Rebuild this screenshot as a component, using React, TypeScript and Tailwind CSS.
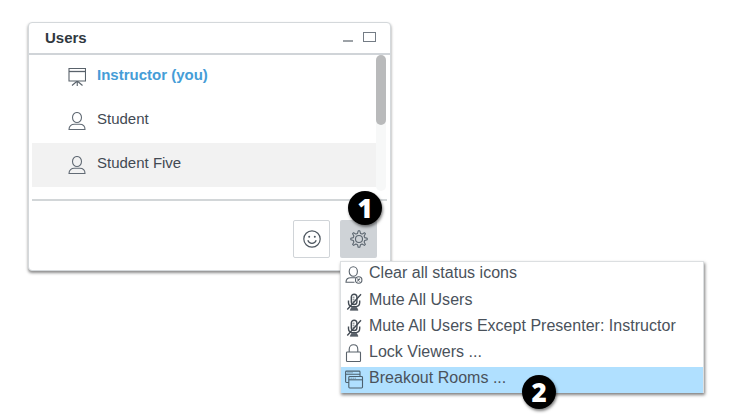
import type { ReactNode } from "react";

const Person = () => (
  <svg width="18" height="19" viewBox="0 0 18 19" fill="none" stroke="#626b75" strokeWidth="1.1">
    <ellipse cx="9" cy="5.5" rx="4.5" ry="5" />
    <path d="M1 17.500h16c0-3.600-2.400-5.200-5.400-5.200H6.400c-3 0-5.400 1.600-5.400 5.200z" />
  </svg>
);

const Board = () => (
  <svg width="18" height="19" viewBox="0 0 18 19" fill="none" stroke="#59626b" strokeWidth="1.1">
    <path d="M1 .5h16.500v12.500H1z" />
    <path d="M1 3.500h16.500" strokeWidth="1.300" />
    <path d="M9.250 13v5M8.700 13.500 4 17.500M9.800 13.500l4.700 4" />
  </svg>
);

const PersonClear = () => (
  <svg width="18" height="18" viewBox="0 0 18 18" fill="none" stroke="#59626b" strokeWidth="1.1">
    <ellipse cx="8.300" cy="5.500" rx="4.100" ry="4.800" />
    <path d="M9.500 16.300H1c0-3.300 1.800-4.600 4.800-4.600h5" />
    <circle cx="13.700" cy="14" r="3.200" />
    <path d="m12.400 12.700 2.600 2.600m0-2.600-2.600 2.600" />
  </svg>
);

const MicOff = () => (
  <svg width="18" height="18" viewBox="0 0 18 18" fill="none" stroke="#444c55" strokeWidth="1.400">
    <rect x="6.300" y="1.200" width="5.600" height="10.300" rx="2.800" />
    <path d="M3.500 7.500v2.200c0 2.700 2.200 4.100 5.600 4.100s5.600-1.400 5.600-4.100V7.500M16 1.200 2.300 16.500" />
    <path d="M6.500 14.500h5.200l1.300 2.800H5.200z" fill="#59616a" strokeWidth=".6" />
    <path d="M7.500 4.200h2M7.500 6.200h2M7.500 8.200h2" strokeWidth=".8" />
  </svg>
);

const Lock = () => (
  <svg width="18" height="19" viewBox="0 0 18 19" fill="none" stroke="#59626b" strokeWidth="1.100">
    <rect x="1.500" y="8" width="14" height="9.500" rx=".8" />
    <path d="M4.200 8V5.500c0-3 1.700-4.700 4.300-4.700s4.300 1.700 4.300 4.700V8" />
  </svg>
);

const Rooms = () => (
  <svg width="19" height="19" viewBox="0 0 19 19" fill="none" stroke="#4c606e" strokeWidth="1.100">
    <path d="M3.800 12.500H1.500q-.9 0-.9-.9V2q0-.9.900-.9h12.600q.9 0 .9.900v4M.6 4.200H15" />
    <path d="M2.500 2.700h5" strokeWidth=".8" strokeDasharray="1 1" />
    <rect x="3.800" y="6.500" width="13.700" height="11.500" rx=".9" />
    <path d="M3.800 9.800h13.700" />
    <path d="M5.700 8.200h5" strokeWidth=".8" strokeDasharray="1 1" />
  </svg>
);

const Smile = () => (
  <svg width="18" height="18" viewBox="0 0 18 18" fill="none" stroke="#4e5760" strokeWidth="1.200">
    <circle cx="9" cy="9" r="8.200" />
    <path d="M4.800 10.300c1.400 4 7 4 8.400 0" />
    <g fill="#4e5760" stroke="none"><circle cx="6.200" cy="6.700" r="1" /><circle cx="11.800" cy="6.700" r="1" /></g>
  </svg>
);

const Gear = () => (
  <svg width="18" height="18" viewBox="0 0 18 18" fill="none" stroke="#5c6670" strokeWidth="1.100" strokeLinejoin="round">
    <path d="M7.500 3.400 8.200.8h1.600l.7 2.600 1.600.7 2.300-1.400 1 1-1.300 2.300.6 1.600 2.500.7v1.500l-2.500.7-.6 1.600 1.300 2.300-1 1-2.300-1.400-1.600.7-.7 2.600H8.200l-.7-2.600-1.600-.7-2.300 1.400-1-1 1.300-2.300-.6-1.600-2.500-.7V8.300l2.500-.7.6-1.600-1.300-2.300 1-1 2.300 1.400z" />
    <circle cx="9" cy="9" r="3.500" />
  </svg>
);

const UserRow = ({ icon, children, className = "" }: { icon: ReactNode; children: ReactNode; className?: string }) => (
  <div className={`flex h-11 shrink-0 items-center pl-9 ${className}`}>
    <span className="w-[29px]">{icon}</span>
    <span className="pb-[5px] leading-5">{children}</span>
  </div>
);

const MenuRow = ({ icon, children, className = "" }: { icon: ReactNode; children: ReactNode; className?: string }) => (
  <div className={`flex h-[26px] items-center pl-1 ${className}`}>
    <span className="w-6 shrink-0 pb-px">{icon}</span>
    <span className="whitespace-nowrap pb-[5px] leading-5 tracking-[0.02px]">{children}</span>
  </div>
);

const Step = ({ n, className }: { n: number; className: string }) => (
  <div className={`absolute flex size-[34px] items-center justify-center rounded-full bg-black font-['Open_Sans','Noto_Sans',sans-serif] text-[26px] leading-none font-extrabold text-white shadow-[1px_2px_3px_rgba(0,0,0,0.5)] ${className}`}>
    {n}
  </div>
);

export default function App() {
  return (
    <main className="relative h-[419px] w-[732px] overflow-hidden bg-white pt-[22px] pl-7 font-['Liberation_Sans',Arial,sans-serif] text-[15px] text-[#424a53]">
      <section className="flex h-[249px] w-[363px] flex-col rounded-[4px] border border-[#d4d8db] bg-white shadow-[0_2px_3px_rgba(0,0,0,0.45)]">
        <header className="flex h-8 shrink-0 items-center border-b-2 border-[#d0d4d8] pr-[14px] pl-4">
          <h1 className="flex-1 font-bold text-[#303840]">Users</h1>
          <span className="mt-[5px] h-[2px] w-[10px] bg-[#9da2a7]" />
          <span className="mb-[2px] ml-[10px] h-[10px] w-[13px] border border-[#747c85]" />
        </header>
        <div className="mx-[3px] flex h-[146px] shrink-0 border-b-2 border-[#d2d6d8]">
          <div className="flex flex-1 flex-col overflow-hidden">
            <UserRow icon={<Board />}><b className="text-[#459dd7]">Instructor (you)</b></UserRow>
            <UserRow icon={<Person />}>Student</UserRow>
            <UserRow icon={<Person />} className="bg-[#f2f2f2]">Student Five</UserRow>
          </div>
          <div className="mr-[1px] h-[136px] w-[10px] rounded-full bg-[#f7f8f8]">
            <div className="h-[70px] rounded-full bg-[#b9babb]" />
          </div>
        </div>
        <footer className="flex justify-end gap-[10px] pt-[19px] pr-[13px]">
          <button className="flex h-[38px] w-[37px] items-center justify-center rounded-[2px] border border-[#d0d4d8]"><Smile /></button>
          <button className="flex h-[38px] w-[37px] items-center justify-center rounded-[2px] bg-[#cfd3d7]"><Gear /></button>
        </footer>
      </section>
      <nav className="absolute top-[261px] left-[340px] h-[132px] w-[364px] border border-b-0 border-[#dcdfe1] bg-white text-base text-[#4a525b] shadow-[1px_2px_3px_rgba(0,0,0,0.5)]">
        <MenuRow icon={<PersonClear />}>Clear all status icons</MenuRow>
        <MenuRow icon={<MicOff />} className="mt-px">Mute All Users</MenuRow>
        <MenuRow icon={<MicOff />}>Mute All Users Except Presenter: Instructor</MenuRow>
        <MenuRow icon={<Lock />}>Lock Viewers ...</MenuRow>
        <MenuRow icon={<Rooms />} className="bg-[#b0e0ff]">Breakout Rooms ...</MenuRow>
      </nav>
      <Step n={1} className="top-[191px] left-[348px]" />
      <Step n={2} className="top-[375px] left-[522px]" />
    </main>
  );
}
